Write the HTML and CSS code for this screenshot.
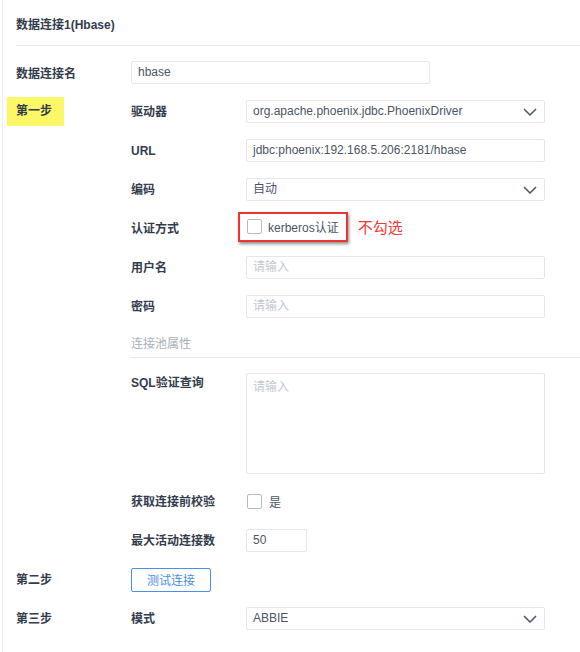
FILE: index.html
```html
<!DOCTYPE html>
<html lang="zh">
<head>
<meta charset="utf-8">
<title>数据连接1(Hbase)</title>
<link rel="stylesheet" href="styles.css">
</head>
<body>
<div class="page">
  <div class="header">数据连接1(Hbase)</div>
  <div class="form">
    <div class="row">
      <div class="wide-label">数据连接名</div>
      <div class="field w-name">hbase</div>
    </div>
    <div class="row">
      <div class="step"><span class="mark">第一步</span></div>
      <div class="label">驱动器</div>
      <div class="field select">org.apache.phoenix.jdbc.PhoenixDriver<svg class="chev" width="14" height="8" viewBox="0 0 14 8"><path d="M1 1 L7 7 L13 1" fill="none" stroke="#4a5468" stroke-width="1.5"/></svg></div>
    </div>
    <div class="row">
      <div class="step"></div>
      <div class="label">URL</div>
      <div class="field">jdbc:phoenix:192.168.5.206:2181/hbase</div>
    </div>
    <div class="row">
      <div class="step"></div>
      <div class="label">编码</div>
      <div class="field select">自动<svg class="chev" width="14" height="8" viewBox="0 0 14 8"><path d="M1 1 L7 7 L13 1" fill="none" stroke="#4a5468" stroke-width="1.5"/></svg></div>
    </div>
    <div class="row">
      <div class="step"></div>
      <div class="label">认证方式</div>
      <div class="control">
        <div class="annot"><span class="checkbox"></span><span class="check-text">kerberos认证</span></div>
        <span class="note">不勾选</span>
      </div>
    </div>
    <div class="row">
      <div class="step"></div>
      <div class="label">用户名</div>
      <div class="field placeholder">请输入</div>
    </div>
    <div class="row">
      <div class="step"></div>
      <div class="label">密码</div>
      <div class="field placeholder">请输入</div>
    </div>
    <div class="section">连接池属性</div>
    <div class="row top">
      <div class="step"></div>
      <div class="label">SQL验证查询</div>
      <div class="field textarea placeholder">请输入</div>
    </div>
    <div class="row">
      <div class="step"></div>
      <div class="label">获取连接前校验</div>
      <div class="control"><span class="checkbox"></span><span class="check-text yes">是</span></div>
    </div>
    <div class="row">
      <div class="step"></div>
      <div class="label">最大活动连接数</div>
      <div class="field w-small">50</div>
    </div>
    <div class="row">
      <div class="step">第二步</div>
      <div class="button">测试连接</div>
    </div>
    <div class="row">
      <div class="step">第三步</div>
      <div class="label">模式</div>
      <div class="field select">ABBIE<svg class="chev" width="14" height="8" viewBox="0 0 14 8"><path d="M1 1 L7 7 L13 1" fill="none" stroke="#4a5468" stroke-width="1.5"/></svg></div>
    </div>
  </div>
</div>
</body>
</html>
```
FILE: styles.css
```css
* { box-sizing: border-box; }
html, body { margin: 0; padding: 0; background: #fff; }
body {
  font-family: "Liberation Sans", "Noto Sans CJK SC", sans-serif;
  font-size: 12px;
  color: #333c4d;
}
.page {
  margin-left: 2px;
  border-left: 1px solid #eeeeee;
  padding-left: 13px;
  min-height: 652px;
  overflow: hidden;
}
.header {
  font-weight: bold;
  line-height: 20px;
  padding-top: 15px;
  padding-bottom: 10px;
  border-bottom: 1px solid #e9e9e9;
}
.form {
  display: flex;
  flex-direction: column;
  gap: 16px;
  padding-top: 15px;
}
.row {
  display: flex;
  align-items: center;
  height: 23px;
}
.row.top { align-items: flex-start; height: auto; }
.step {
  width: 115px;
  flex: none;
  font-weight: bold;
  line-height: 20px;
}
.mark {
  display: inline-block;
  background: #fcf767;
  height: 29px;
  line-height: 29px;
  margin: -3px 0 -3px -9px;
  padding: 0 12px 0 9px;
}
.wide-label {
  width: 115px;
  flex: none;
  font-weight: bold;
}
.label {
  width: 115px;
  flex: none;
  font-weight: bold;
  line-height: 20px;
}
.field {
  width: 299px;
  height: 23px;
  border: 1px solid #e3e6eb;
  border-radius: 2px;
  padding: 0 6px;
  line-height: 21px;
  color: #4b5565;
  display: flex;
  align-items: center;
  justify-content: space-between;
}
.w-name { width: 299px; }
.w-small { width: 61px; }
.placeholder { color: #c3c7cf; }
.textarea {
  height: 101px;
  align-items: flex-start;
  padding-top: 3px;
}
.chev { flex: none; margin-right: 1px; }
.control {
  display: flex;
  align-items: center;
}
.annot {
  display: flex;
  align-items: center;
  height: 30px;
  border: 2px solid #ee3333;
  box-shadow: 1px 2px 3px rgba(0, 0, 0, 0.45);
  padding: 0 7px 0 7px;
  margin: 0 0 4px -8px;
}
.checkbox {
  display: inline-block;
  width: 15px;
  height: 15px;
  border: 1px solid #b5bcc8;
  border-radius: 2px;
  background: #fff;
  flex: none;
}
.control > .checkbox { margin-left: 1px; }
.check-text {
  margin-left: 6px;
  color: #4b5565;
}
.yes { margin-left: 7px; }
.note {
  margin-left: 10px;
  color: #f03a35;
  font-size: 15px;
  margin-bottom: 4px;
}
.section {
  margin-left: 115px;
  line-height: 20px;
  padding-bottom: 3px;
  border-bottom: 1px solid #e6e6e6;
  color: #a9afb8;
  margin-bottom: -1px;
}
.button {
  width: 80px;
  height: 24px;
  border: 1px solid #4a8fe6;
  border-radius: 2px;
  color: #4a8fe6;
  display: flex;
  align-items: center;
  justify-content: center;
}
```
